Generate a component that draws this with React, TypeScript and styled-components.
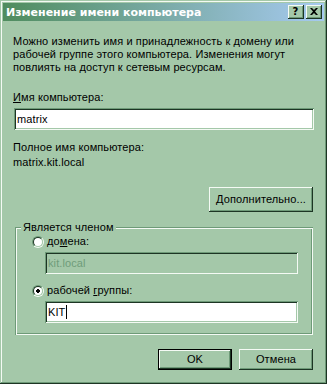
import styled, { createGlobalStyle } from 'styled-components'

const FACE = '#a4c8a9'
const LIGHT = '#f4faf4'
const SHADOW = '#6e9a78'
const DARK = '#1d3524'

const Global = createGlobalStyle`
  html, body {
    margin: 0;
    padding: 0;
    background: ${FACE};
  }
  body {
    font-family: 'Liberation Sans', Arial, sans-serif;
    font-size: 11px;
    letter-spacing: 0.1px;
    color: #000;
  }
`

const Window = styled.div`
  width: 327px;
  height: 384px;
  box-sizing: border-box;
  padding: 3px;
  background: ${FACE};
  box-shadow:
    inset -1px -1px 0 ${DARK},
    inset 1px 1px 0 ${FACE},
    inset -2px -2px 0 ${SHADOW},
    inset 2px 2px 0 ${LIGHT};
  display: flex;
  flex-direction: column;
`

const TitleBar = styled.div`
  height: 18px;
  display: flex;
  align-items: center;
  padding: 0 2px 0 3px;
  background: linear-gradient(to right, #4f8c5e, #a6caf0);
`

const TitleText = styled.div`
  flex: 1;
  color: #fff;
  font-family: 'DejaVu Sans', Verdana, sans-serif;
  font-weight: bold;
  font-size: 11px;
  letter-spacing: 0;
`

const TitleButtons = styled.div`
  display: flex;
  gap: 2px;
`

const CaptionButton = styled.div`
  width: 16px;
  height: 14px;
  box-sizing: border-box;
  background: ${FACE};
  box-shadow:
    inset -1px -1px 0 ${DARK},
    inset 1px 1px 0 ${LIGHT},
    inset -2px -2px 0 ${SHADOW};
  display: flex;
  align-items: center;
  justify-content: center;
  font-family: 'DejaVu Sans', sans-serif;
  font-weight: bold;
  font-size: 10px;
  line-height: 1;
  padding: 0 1px 1px 0;
`

const Body = styled.div`
  flex: 1;
  display: flex;
  flex-direction: column;
  padding: 14px 10px 0 10px;
`

const Para = styled.p`
  margin: 0;
  line-height: 13px;
  width: 295px;
`

const Label = styled.div<{ $top?: number }>`
  line-height: 13px;
  margin-top: ${p => p.$top ?? 0}px;
`

const Field = styled.div<{ $disabled?: boolean; $top?: number }>`
  height: 22px;
  box-sizing: border-box;
  margin-top: ${p => p.$top ?? 0}px;
  background: ${p => (p.$disabled ? FACE : '#fff')};
  color: ${p => (p.$disabled ? '#6f9c7a' : '#000')};
  box-shadow:
    inset 1px 1px 0 ${SHADOW},
    inset -1px -1px 0 ${LIGHT},
    inset 2px 2px 0 ${DARK},
    inset -2px -2px 0 ${FACE};
  padding: 0 3px;
  display: flex;
  align-items: center;
  line-height: 13px;
`

const NameField = styled(Field)`
  margin-left: 1px;
`

const Caret = styled.span`
  display: inline-block;
  width: 1px;
  height: 14px;
  background: #000;
  margin-left: 1px;
`

const Button = styled.div<{ $w: number; $h: number; $default?: boolean }>`
  width: ${p => p.$w}px;
  height: ${p => p.$h}px;
  box-sizing: border-box;
  background: ${FACE};
  display: flex;
  align-items: center;
  justify-content: center;
  line-height: 13px;
  box-shadow: ${p =>
    p.$default
      ? `inset 0 0 0 1px #000, inset -2px -2px 0 ${DARK}, inset 2px 2px 0 ${LIGHT}, inset -3px -3px 0 ${SHADOW}`
      : `inset -1px -1px 0 ${DARK}, inset 1px 1px 0 ${LIGHT}, inset -2px -2px 0 ${SHADOW}`};
`

const RightRow = styled.div<{ $top: number; $gap?: number }>`
  display: flex;
  justify-content: flex-end;
  gap: ${p => p.$gap ?? 0}px;
  margin-top: ${p => p.$top}px;
  padding-right: 1px;
`

const GroupBox = styled.fieldset`
  margin: 15px 1px 0 2px;
  padding: 3px 0 8px 0;
  border: none;
  box-shadow:
    inset 1px 1px 0 ${SHADOW},
    inset 2px 2px 0 ${LIGHT},
    inset -1px -1px 0 ${LIGHT},
    inset -2px -2px 0 ${SHADOW};
  min-width: 0;
  height: 108px;
  box-sizing: border-box;
  display: flex;
  flex-direction: column;
  position: relative;
`

const Legend = styled.div`
  position: absolute;
  top: -6px;
  left: 6px;
  padding: 0 2px;
  background: ${FACE};
  line-height: 13px;
`

const RadioRow = styled.div<{ $top: number }>`
  display: flex;
  align-items: center;
  gap: 3px;
  margin-top: ${p => p.$top}px;
  padding-left: 17px;
  line-height: 13px;
`

const Radio = styled.span<{ $checked?: boolean }>`
  width: 12px;
  height: 12px;
  box-sizing: border-box;
  border-radius: 50%;
  border: 1px solid;
  border-color: ${SHADOW} ${LIGHT} ${LIGHT} ${SHADOW};
  display: flex;
  align-items: center;
  justify-content: center;
  &::before {
    content: '';
    width: 10px;
    height: 10px;
    box-sizing: border-box;
    border-radius: 50%;
    border: 1px solid;
    border-color: ${DARK} ${FACE} ${FACE} ${DARK};
    background: ${p => (p.$checked ? 'radial-gradient(circle, #000 0 2px, #fff 2.1px)' : '#fff')};
  }
`

const Indent = styled.div<{ $top: number }>`
  padding-left: 30px;
  padding-right: 15px;
  margin-top: ${p => p.$top}px;
`

export default function App() {
  return (
    <>
      <Global />
      <Window>
        <TitleBar>
          <TitleText>Изменение имени компьютера</TitleText>
          <TitleButtons>
            <CaptionButton>?</CaptionButton>
            <CaptionButton>
              <svg width="8" height="7" viewBox="0 0 8 7">
                <path d="M0 0h2l2 2 2-2h2L5 3.5 8 7H6L4 5 2 7H0l3-3.5z" fill="#000" />
              </svg>
            </CaptionButton>
          </TitleButtons>
        </TitleBar>
        <Body>
          <Para>
            Можно изменить имя и принадлежность к домену или рабочей группе этого компьютера. Изменения могут
            повлиять на доступ к сетевым ресурсам.
          </Para>
          <Label $top={17}>
            <u>И</u>мя компьютера:
          </Label>
          <NameField $top={4}>matrix</NameField>
          <Label $top={11}>Полное имя компьютера:</Label>
          <Label $top={2}>matrix.kit.local</Label>
          <RightRow $top={18}>
            <Button $w={104} $h={25}>
              <span>
                <u>Д</u>ополнительно...
              </span>
            </Button>
          </RightRow>
          <GroupBox>
            <Legend>Является членом</Legend>
            <RadioRow $top={5}>
              <Radio />
              <span>
                до<u>м</u>ена:
              </span>
            </RadioRow>
            <Indent $top={4}>
              <Field $disabled>kit.local</Field>
            </Indent>
            <RadioRow $top={10}>
              <Radio $checked />
              <span>
                рабочей <u>г</u>руппы:
              </span>
            </RadioRow>
            <Indent $top={4}>
              <Field>
                KIT
                <Caret />
              </Field>
            </Indent>
          </GroupBox>
          <RightRow $top={14} $gap={7}>
            <Button $w={74} $h={21} $default>
              OK
            </Button>
            <Button $w={74} $h={21}>
              Отмена
            </Button>
          </RightRow>
        </Body>
      </Window>
    </>
  )
}
